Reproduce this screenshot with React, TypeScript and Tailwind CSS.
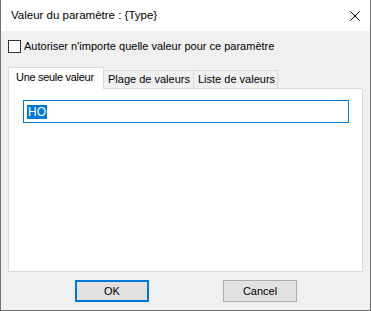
export default function App() {
  const font = { fontFamily: '"Liberation Sans", Arial, sans-serif' }
  return (
    <div
      className="w-[371px] h-[311px] bg-[#f0f0f0] border-x border-b border-[#6f6f6f] flex flex-col text-[11px] text-black overflow-hidden"
      style={font}
    >
      {/* Title bar */}
      <div className="h-[31px] bg-white flex items-center justify-between pl-[10px] pr-[10px] shrink-0">
        <span className="leading-none text-[11.5px]">Valeur du paramètre : {'{Type}'}</span>
        <svg className="w-[10px] h-[10px]" viewBox="0 0 10 10" fill="none" stroke="#000" strokeWidth={1}>
          <path d="M0.5 0.5L9.5 9.5M9.5 0.5L0.5 9.5" />
        </svg>
      </div>

      {/* Checkbox */}
      <label className="flex items-center gap-[3px] pl-[7px] mt-[9px] h-[13px] shrink-0">
        <span className="w-[13px] h-[13px] border border-[#333] bg-white shrink-0" />
        <span className="leading-none whitespace-nowrap">Autoriser n'importe quelle valeur pour ce paramètre</span>
      </label>

      {/* Tabs */}
      <div className="flex items-end pl-[7px] mt-[14px] h-[22px] shrink-0">
        <div className="w-[96px] h-[22px] bg-white border-t border-x border-[#d9d9d9] pl-[7px] pt-[4px] leading-none whitespace-nowrap tracking-[-0.3px]">
          Une seule valeur
        </div>
        <div className="w-[90px] h-[19px] bg-[#f0f0f0] border-t border-r border-b border-[#d9d9d9] flex items-center pl-[4px] leading-none whitespace-nowrap">
          Plage de valeurs
        </div>
        <div className="w-[84px] h-[19px] bg-[#f0f0f0] border-t border-r border-b border-[#d9d9d9] flex items-center pl-[4px] leading-none whitespace-nowrap">
          Liste de valeurs
        </div>
        <div className="flex-1 h-[19px] border-b border-[#d9d9d9] mr-[8px]" />
      </div>

      {/* Panel */}
      <div className="ml-[7px] w-[355px] h-[183px] bg-white border-x border-b border-[#d9d9d9] pt-[11px] pl-[14px] shrink-0">
        <div className="w-[326px] h-[23px] border border-[#0078d7] flex items-center pl-[3px]">
          <span className="bg-[#0078d7] text-white text-[12px] leading-[14px] px-[1px]">HO</span>
        </div>
      </div>

      {/* Buttons */}
      <div className="flex pl-[74px] gap-[74px] mt-[8px]">
        <button className="w-[74px] h-[22px] bg-[#e1e1e1] border-2 border-[#0078d7] flex items-center justify-center leading-none">
          OK
        </button>
        <button className="w-[74px] h-[22px] bg-[#e1e1e1] border border-[#adadad] flex items-center justify-center leading-none">
          Cancel
        </button>
      </div>
    </div>
  )
}
